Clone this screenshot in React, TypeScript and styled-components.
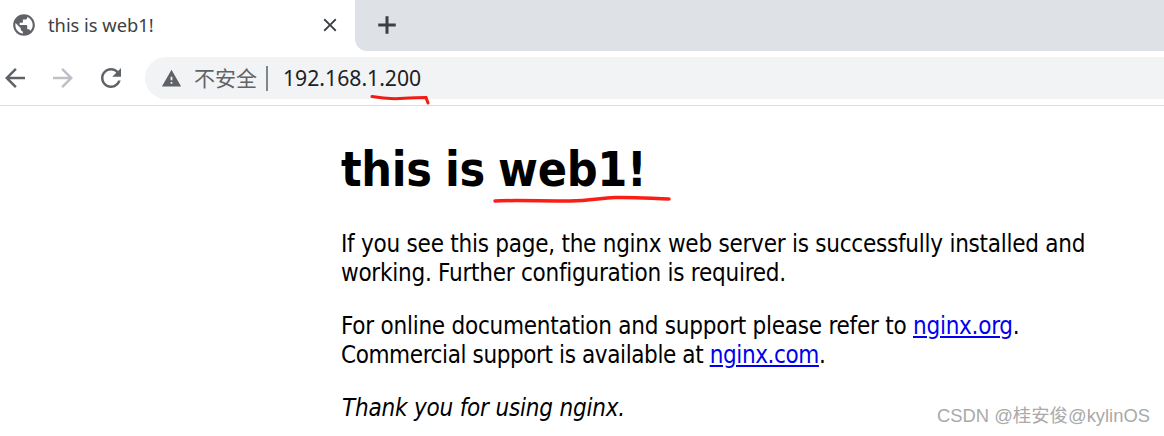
import React from "react";
import styled, { createGlobalStyle } from "styled-components";

const Global = createGlobalStyle`
  html, body { margin: 0; padding: 0; background: #fff; }
  body { width: 1164px; height: 436px; overflow: hidden; }
`;

const Window = styled.div`
  position: relative;
  width: 1164px;
  height: 436px;
  overflow: hidden;
  background: #fff;
  font-family: "DejaVu Sans Condensed", "DejaVu Sans", sans-serif;
`;

const TabStrip = styled.div`
  display: flex;
  height: 51px;
`;

const Tab = styled.div`
  position: relative;
  z-index: 1;
  box-sizing: border-box;
  width: 355px;
  display: flex;
  align-items: center;
  padding: 0 14px 2px 11px;
  background: #fff;
  border-top-right-radius: 12px;
`;

const TabTitle = styled.span`
  flex: 1;
  margin-left: 11px;
  font-family: "Noto Sans", sans-serif;
  font-size: 18.3px;
  color: #3c4043;
`;

const TabRest = styled.div`
  position: relative;
  flex: 1;
  display: flex;
  align-items: center;
  padding: 0 0 2px 17px;
  background: #dee1e6;
  border-bottom-left-radius: 12px;
  &::before {
    content: "";
    position: absolute;
    left: -12px;
    top: 0;
    width: 24px;
    height: 12px;
    background: #dee1e6;
    z-index: -1;
  }
`;

const Toolbar = styled.div`
  box-sizing: border-box;
  height: 55px;
  display: flex;
  align-items: center;
  border-bottom: 1px solid #dadce0;
`;

const NavIcons = styled.div`
  display: flex;
  width: 145px;
  gap: 18px;
`;

const Omnibox = styled.div`
  flex: 1;
  height: 42px;
  display: flex;
  align-items: center;
  padding-left: 16px;
  background: #f1f3f4;
  border-radius: 21px 0 0 21px;
`;

const SecurityText = styled.span`
  margin: 0 0 2px 12px;
  font-family: "Noto Sans CJK SC", sans-serif;
  font-size: 21px;
  color: #5f6368;
`;

const Separator = styled.span`
  width: 2px;
  height: 25px;
  margin: 0 15px 0 9px;
  background: #80868b;
`;

const Address = styled.span`
  margin-bottom: 2px;
  font-family: "Noto Sans", sans-serif;
  font-size: 21.2px;
  color: #202124;
`;

const Content = styled.main`
  box-sizing: border-box;
  width: 775px;
  margin-left: 341px;
  padding-top: 34px;
  color: #000;
`;

const Heading = styled.h1`
  margin: 0 0 32px;
  font-size: 48px;
  line-height: 58px;
  font-weight: 700;
  letter-spacing: -0.3px;
  word-spacing: -1.5px;
`;

const Paragraph = styled.p`
  margin: 0 0 24px;
  font-size: 24px;
  line-height: 29px;
  letter-spacing: -0.25px;
`;

const TightLine = styled.span`
  letter-spacing: -0.4px;
`;

const Closing = styled.em`
  margin-left: 1px;
  letter-spacing: -0.2px;
`;

const Link = styled.a`
  color: #0000ee;
  text-decoration: underline;
`;

const Marks = styled.svg`
  position: absolute;
  left: 0;
  top: 0;
  pointer-events: none;
  z-index: 2;
`;

const Watermark = styled.span`
  position: absolute;
  right: 14px;
  bottom: 9px;
  font-family: "Liberation Sans", "Noto Sans CJK SC", sans-serif;
  font-size: 18.4px;
  color: #a9a9a9;
  z-index: 3;
`;

const Icon = ({ d, size, color }: { d: string; size: number; color: string }) => (
  <svg width={size} height={size} viewBox="0 0 24 24" fill={color} style={{ flex: "none", display: "block" }}>
    <path d={d} />
  </svg>
);

const GLOBE =
  "M12 2C6.48 2 2 6.48 2 12s4.48 10 10 10 10-4.48 10-10S17.52 2 12 2zm-1 17.93c-3.95-.49-7-3.85-7-7.93 0-.62.08-1.21.21-1.79L9 15v1c0 1.1.9 2 2 2v1.93zm6.9-2.54c-.26-.81-1-1.39-1.9-1.39h-1v-3c0-.55-.45-1-1-1H8v-2h2c.55 0 1-.45 1-1V7h2c1.1 0 2-.9 2-2v-.41c2.93 1.19 5 4.06 5 7.41 0 2.08-.8 3.97-2.1 5.39z";
const CLOSE = "M19 6.41 17.59 5 12 10.59 6.41 5 5 6.41 10.59 12 5 17.59 6.41 19 12 13.41 17.59 19 19 17.59 13.41 12z";
const PLUS = "M19 13.2h-5.800v5.800h-2.400v-5.800H5v-2.400h5.800V5h2.400v5.800H19v2.400z";
const BACK = "M20 11H7.83l5.59-5.59L12 4l-8 8 8 8 1.41-1.41L7.83 13H20v-2z";
const FORWARD = "M12 4l-1.41 1.41L16.17 11H4v2h12.17l-5.58 5.59L12 20l8-8z";
const RELOAD =
  "M17.65 6.35C16.2 4.9 14.21 4 12 4c-4.42 0-7.99 3.58-7.99 8s3.57 8 7.99 8c3.73 0 6.84-2.55 7.73-6h-2.08c-.82 2.33-3.04 4-5.65 4-3.31 0-6-2.69-6-6s2.69-6 6-6c1.66 0 3.14.69 4.22 1.78L13 11h7V4l-2.35 2.35z";
const WARNING = "M1 21h22L12 2 1 21zm12-3h-2v-2h2v2zm0-4h-2v-4h2v4z";

export default function App() {
  return (
    <Window>
      <Global />
      <TabStrip>
        <Tab>
          <Icon d={GLOBE} size={26} color="#5f6368" />
          <TabTitle>this is web1!</TabTitle>
          <Icon d={CLOSE} size={22} color="#3c4043" />
        </Tab>
        <TabRest>
          <Icon d={PLUS} size={30} color="#3c4043" />
        </TabRest>
      </TabStrip>
      <Toolbar>
        <NavIcons>
          <Icon d={BACK} size={30} color="#5f6368" />
          <Icon d={FORWARD} size={30} color="#bdc1c6" />
          <Icon d={RELOAD} size={30} color="#5f6368" />
        </NavIcons>
        <Omnibox>
          <Icon d={WARNING} size={21} color="#5f6368" />
          <SecurityText>不安全</SecurityText>
          <Separator />
          <Address>192.168.1.200</Address>
        </Omnibox>
      </Toolbar>
      <Content>
        <Heading>this is web1!</Heading>
        <Paragraph>
          If you see this page, the nginx web server is successfully installed and working. Further configuration is
          required.
        </Paragraph>
        <Paragraph>
          For online documentation and support please refer to <Link href="#">nginx.org</Link>.<br />
          <TightLine>
            Commercial support is available at <Link href="#">nginx.com</Link>.
          </TightLine>
        </Paragraph>
        <Paragraph>
          <Closing>Thank you for using nginx.</Closing>
        </Paragraph>
      </Content>
      <Marks width="1164" height="436" viewBox="0 0 1164 436" fill="none">
        <path d="M372 96.500 C380 98 390 99 400 98.500 C410 98 420 97.500 426 97.500 L428 103" stroke="#f01c14" strokeWidth="3" strokeLinecap="round" />
        <path d="M495 201 C510 200 540 201 570 201 C590 201 600 198 615 197.500 C640 197 655 199 669 199" stroke="#fa1e14" strokeWidth="3.500" strokeLinecap="round" />
      </Marks>
      <Watermark>CSDN @桂安俊@kylinOS</Watermark>
    </Window>
  );
}
